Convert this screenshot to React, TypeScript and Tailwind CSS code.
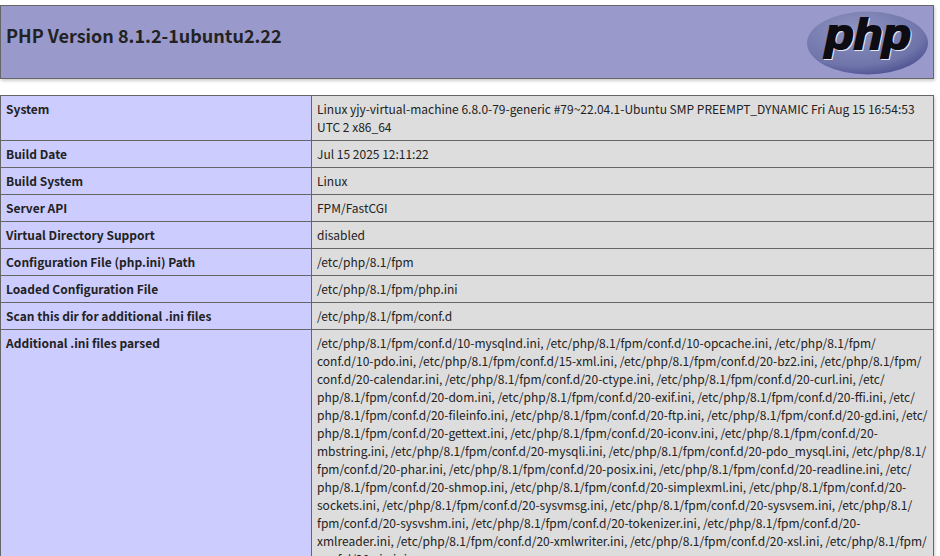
const rows: [string, string][] = [
  ["System", "Linux yjy-virtual-machine 6.8.0-79-generic #79~22.04.1-Ubuntu SMP PREEMPT_DYNAMIC Fri Aug 15 16:54:53 UTC 2 x86_64"],
  ["Build Date", "Jul 15 2025 12:11:22"],
  ["Build System", "Linux"],
  ["Server API", "FPM/FastCGI"],
  ["Virtual Directory Support", "disabled"],
  ["Configuration File (php.ini) Path", "/etc/php/8.1/fpm"],
  ["Loaded Configuration File", "/etc/php/8.1/fpm/php.ini"],
  ["Scan this dir for additional .ini files", "/etc/php/8.1/fpm/conf.d"],
  [
    "Additional .ini files parsed",
    [
      "10-mysqlnd", "10-opcache", "10-pdo", "15-xml", "20-bz2", "20-calendar", "20-ctype", "20-curl", "20-dom", "20-exif",
      "20-ffi", "20-fileinfo", "20-ftp", "20-gd", "20-gettext", "20-iconv", "20-mbstring", "20-mysqli", "20-pdo_mysql",
      "20-phar", "20-posix", "20-readline", "20-shmop", "20-simplexml", "20-sockets", "20-sysvmsg", "20-sysvsem",
      "20-sysvshm", "20-tokenizer", "20-xmlreader", "20-xmlwriter", "20-xsl", "20-zip",
    ]
      .map((n) => `/etc/php/8.1/fpm/conf.d/${n}.ini`)
      .join(", ")
      // paths may wrap after a slash when a letter follows
      .replace(/\/(?=[a-z])/g, "/\u200b"),
  ],
];

function PhpLogo() {
  const letters = {
    textAnchor: "middle" as const,
    fontFamily: "'Liberation Sans', sans-serif",
    fontWeight: 700,
    fontStyle: "italic",
    fontSize: 42,
    textLength: 86,
    lengthAdjust: "spacingAndGlyphs" as const,
  };
  return (
    <svg width="123" height="66" viewBox="0 0 123 66" className="block">
      <defs>
        <radialGradient id="logoFill" cx="40%" cy="30%" r="75%">
          <stop offset="0%" stopColor="#8f94c2" />
          <stop offset="75%" stopColor="#6f74aa" />
          <stop offset="100%" stopColor="#4c5090" />
        </radialGradient>
      </defs>
      <ellipse cx="61.5" cy="33" rx="60.5" ry="31.5" fill="url(#logoFill)" />
      <text {...letters} x={63} y={40} fill="#e8e8f4" stroke="#e8e8f4" strokeWidth="2">php</text>
      <text {...letters} x={62} y={39} fill="#0c0c12" stroke="#0c0c12" strokeWidth="2">php</text>
    </svg>
  );
}

export default function App() {
  return (
    <div className="h-[556px] w-[940px] overflow-hidden bg-white font-['Noto_Sans_CJK_SC','Noto_Sans',sans-serif] text-xs text-[#222]">
      <div className="mt-[5px] flex h-[74px] w-[934px] items-start justify-between border border-[#666] bg-[#99c] pl-[5px] pr-[4px] pt-[4px] shadow-[1px_2px_3px_rgba(0,0,0,0.2)]">
        <h1 className="mt-[8px] text-[18px] font-bold leading-[34px]">PHP Version 8.1.2-1ubuntu2.22</h1>
        <PhpLogo />
      </div>
      <table className="mt-[16px] w-[934px] table-fixed border-collapse shadow-[1px_2px_3px_rgba(0,0,0,0.2)]">
        <colgroup>
          <col className="w-[311px]" />
          <col />
        </colgroup>
        <tbody>
          {rows.map(([label, value]) => (
            <tr key={label}>
              <td className="border border-[#666] bg-[#ccf] px-[5px] py-[4px] align-top font-bold leading-[18px]">{label}</td>
              <td className="border border-[#666] bg-[#ddd] px-[5px] py-[4px] align-top leading-[18px] [overflow-wrap:anywhere]">{value}</td>
            </tr>
          ))}
        </tbody>
      </table>
    </div>
  );
}
